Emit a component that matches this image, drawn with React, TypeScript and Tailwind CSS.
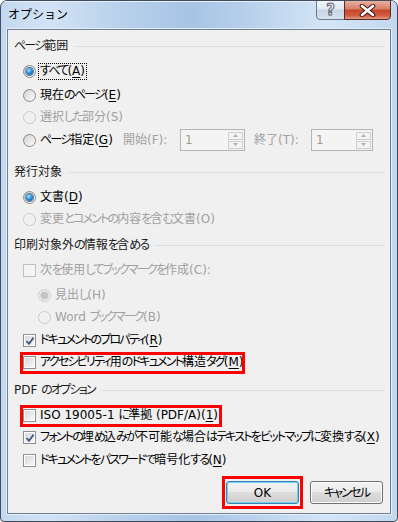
import React from "react";

function J({ t }: { t: string }) {
  const parts = t.match(/[\u3040-\u30ff]+|[^\u3040-\u30ff]+/g) || [];
  return (
    <>
      {parts.map((p, i) =>
        /[\u3040-\u30ff]/.test(p) ? (
          <span key={i} className="tracking-[-1.8px]">
            {p}
          </span>
        ) : (
          <span key={i}>{p}</span>
        )
      )}
    </>
  );
}

function Radio({ checked, disabled }: { checked?: boolean; disabled?: boolean }) {
  if (disabled) {
    return (
      <span className="w-[13px] h-[13px] shrink-0 rounded-full border border-[#c9c9c9] bg-[#f4f4f4] flex items-center justify-center">
        {checked ? (
          <span className="w-[7px] h-[7px] rounded-full bg-[#c4c4c4] shadow-[0_0_0_1px_#d8d8d8]" />
        ) : (
          <span className="w-[9px] h-[9px] rounded-full bg-[#f0f0f0]" />
        )}
      </span>
    );
  }
  return (
    <span className="w-[13px] h-[13px] shrink-0 rounded-full border border-[#8c8c8c] bg-[linear-gradient(135deg,#cfcfcf,#ffffff)] flex items-center justify-center">
      {checked ? (
        <span className="w-[7px] h-[7px] rounded-full bg-[radial-gradient(circle_at_40%_35%,#a8e4ff_0%,#2f8fd8_45%,#0d4a86_100%)] shadow-[0_0_0_1px_#5a7a9a]" />
      ) : (
        <span className="w-[9px] h-[9px] rounded-full bg-[linear-gradient(135deg,#d6d6d6,#fafafa)]" />
      )}
    </span>
  );
}

function Check({ checked, disabled }: { checked?: boolean; disabled?: boolean }) {
  if (disabled) {
    return <span className="w-[13px] h-[13px] shrink-0 border border-[#c0c0c0] bg-[#f4f4f4]" />;
  }
  return (
    <span className="relative w-[13px] h-[13px] shrink-0 border border-[#8e8f8f] bg-white p-[1px]">
      <span className="block w-full h-full bg-[linear-gradient(135deg,#d9d9d9,#f7f7f7)]" />
      {checked && (
        <svg className="absolute left-[1px] top-[1px]" width="10" height="10" viewBox="0 0 10 10">
          <path d="M1.5 5 L4 7.8 L8.6 1.6" fill="none" stroke="#3f5784" strokeWidth="1.8" />
        </svg>
      )}
    </span>
  );
}

function Label({
  pre,
  k,
  post,
  disabled,
  focus,
}: {
  pre: string;
  k: string;
  post: string;
  disabled?: boolean;
  focus?: boolean;
}) {
  return (
    <span
      className={`px-[1px] border leading-[15px] whitespace-nowrap ${focus ? "border-dotted border-black" : "border-transparent"} ${disabled ? "text-[#a0a0a0]" : "text-black"}`}
    >
      <J t={pre} />
      {disabled ? <span>{k}</span> : <span className="underline underline-offset-[2px] decoration-1">{k}</span>}
      <J t={post} />
    </span>
  );
}

function Header({ t, className }: { t: string; className: string }) {
  return (
    <div className={`flex items-center h-[22px] pl-[6px] pr-[5px] ${className}`}>
      <span className="text-[#1b1b1b] whitespace-nowrap">
        <J t={t} />
      </span>
      <span className="flex-1 h-px bg-[#d5dfe5] ml-[7px] mt-[1px]" />
    </div>
  );
}

function SpinInput() {
  return (
    <span className="flex items-center justify-between h-[22px] w-full border border-[#b5b5b5] bg-[#f4f4f4] pl-[4px] pr-[1px]">
      <span className="text-[#a59b8a]">1</span>
      <span className="flex flex-col gap-[1px] w-[15px]">
        <span className="h-[8px] border border-[#cfcfcf] bg-[#f3f3f3] flex items-center justify-center">
          <svg width="5" height="3" viewBox="0 0 5 3">
            <path d="M0 3 L2.5 0 L5 3Z" fill="#b0b0b0" />
          </svg>
        </span>
        <span className="h-[8px] border border-[#cfcfcf] bg-[#f3f3f3] flex items-center justify-center">
          <svg width="5" height="3" viewBox="0 0 5 3">
            <path d="M0 0 L2.5 3 L5 0Z" fill="#b0b0b0" />
          </svg>
        </span>
      </span>
    </span>
  );
}

function Btn({ children, def }: { children: React.ReactNode; def?: boolean }) {
  return (
    <div
      className={`w-[73px] h-[23px] rounded-[3px] border flex items-center justify-center text-black ${def ? "border-[#3c7fb1] shadow-[inset_0_0_0_1px_#6fd0f6]" : "border-[#707070] shadow-[inset_0_0_0_1px_#fcfcfc]"} bg-[linear-gradient(180deg,#f2f2f2_0%,#ebebeb_49%,#dddddd_50%,#cfcfcf_100%)]`}
    >
      {children}
    </div>
  );
}

export default function App() {
  return (
    <div className="w-[398px] h-[522px] flex flex-col overflow-hidden rounded-t-[7px] rounded-b-[4px] border border-[#3f4d5e] bg-[linear-gradient(90deg,#c3d8ef_0%,#d2e3f5_12%,#b9d1eb_30%,#a7c4e5_48%,#b7d0eb_62%,#d3e5f7_82%,#c2d8ef_100%)] [font-family:'DejaVu_Sans','Noto_Sans_CJK_JP',sans-serif] [font-feature-settings:'palt'] text-[12px]">
      <div className="h-[28px] shrink-0 flex items-start shadow-[inset_0_1px_0_#e8f1fb]">
        <span className="pl-[7px] pt-[5px] text-[12px] text-black leading-[18px] [font-feature-settings:normal]">オプション</span>
        <div className="ml-auto mr-[6px] flex h-[20px] -mt-[1px]">
          <div className="w-[29px] h-[20px] border border-[#6b7a8a] rounded-bl-[4px] bg-[linear-gradient(180deg,#f1f5f9_0%,#e0e8f1_45%,#c8d5e3_50%,#d6e2ee_100%)] flex items-center justify-center">
            <span className="text-[15px] font-bold leading-none text-[#f4f6f8] [-webkit-text-stroke:1px_#5b6470]">?</span>
          </div>
          <div className="w-[47px] h-[20px] -ml-px border border-[#5b2a22] rounded-br-[4px] bg-[linear-gradient(180deg,#eab0a2_0%,#d77e66_45%,#c5452b_50%,#d15a3e_80%,#e39a84_100%)] flex items-center justify-center">
            <svg width="17" height="13" viewBox="0 0 17 13">
              <path d="M3 2 L14 11 M14 2 L3 11" stroke="#3a1a14" strokeWidth="4.6" strokeLinecap="round" />
              <path d="M3 2 L14 11 M14 2 L3 11" stroke="#ffffff" strokeWidth="2.6" strokeLinecap="round" />
            </svg>
          </div>
        </div>
      </div>

      <div className="mx-[6px] mb-[7px] flex-1 flex flex-col border border-[#6f8091] bg-[#f0f0f0] shadow-[0_0_0_1px_#e4eefa]">
        <Header t="ページ範囲" className="mt-[5px]" />

        <div className="flex items-center gap-[2px] h-[22px] pl-[15px] mt-[3px]">
          <Radio checked />
          <Label focus pre="すべて(" k="A" post=")" />
        </div>
        <div className="flex items-center gap-[2px] h-[22px] pl-[15px] mt-[2px]">
          <Radio />
          <Label pre="現在のページ(" k="E" post=")" />
        </div>
        <div className="flex items-center gap-[2px] h-[22px] pl-[15px]">
          <Radio disabled />
          <Label disabled pre="選択した部分(" k="S" post=")" />
        </div>
        <div className="flex items-center h-[22px] pl-[15px] mt-[1px]">
          <span className="flex items-center gap-[2px] w-[100px]">
            <Radio />
            <Label pre="ページ指定(" k="G" post=")" />
          </span>
          <span className="w-[57px] text-[#a0a0a0] whitespace-nowrap">開始(F):</span>
          <span className="w-[65px]">
            <SpinInput />
          </span>
          <span className="w-[57px] ml-[9px] text-[#a0a0a0] whitespace-nowrap">終了(T):</span>
          <span className="w-[62px]">
            <SpinInput />
          </span>
        </div>

        <Header t="発行対象" className="mt-[10px]" />
        <div className="flex items-center gap-[2px] h-[22px] pl-[15px] mt-[3px]">
          <Radio checked />
          <Label pre="文書(" k="D" post=")" />
        </div>
        <div className="flex items-center gap-[2px] h-[22px] pl-[15px]">
          <Radio disabled />
          <Label disabled pre="変更とコメントの内容を含む文書(" k="O" post=")" />
        </div>

        <Header t="印刷対象外の情報を含める" className="mt-[4px]" />
        <div className="flex items-center gap-[2px] h-[22px] pl-[15px] mt-[3px]">
          <Check disabled />
          <Label disabled pre="次を使用してブックマークを作成(" k="C" post="):" />
        </div>
        <div className="flex items-center gap-[2px] h-[22px] pl-[30px] mt-[3px]">
          <Radio disabled checked />
          <Label disabled pre="見出し(" k="H" post=")" />
        </div>
        <div className="flex items-center gap-[2px] h-[22px] pl-[30px]">
          <Radio disabled />
          <Label disabled pre="Word ブックマーク(" k="B" post=")" />
        </div>
        <div className="flex items-center gap-[2px] h-[22px] pl-[15px] mt-[1px]">
          <Check checked />
          <Label pre="ドキュメントのプロパティ(" k="R" post=")" />
        </div>
        <div className="relative flex items-center gap-[2px] h-[22px] pl-[15px]">
          <Check />
          <Label pre="アクセシビリティ用のドキュメント構造タグ(" k="M" post=")" />
          <span className="absolute left-[12px] top-[1px] w-[225px] h-[22px] border-[3px] border-[#ff0000]" />
        </div>

        <Header t="PDF のオプション" className="mt-[6px]" />
        <div className="relative flex items-center gap-[2px] h-[22px] pl-[15px] mt-[3px]">
          <Check />
          <Label pre="ISO 19005-1 に準拠 (PDF/A)(" k="1" post=")" />
          <span className="absolute left-[12px] top-[1px] w-[202px] h-[22px] border-[3px] border-[#ff0000]" />
        </div>
        <div className="flex items-center gap-[2px] h-[22px] pl-[15px]">
          <Check checked />
          <Label pre="フォントの埋め込みが不可能な場合はテキストをビットマップに変換する(" k="X" post=")" />
        </div>
        <div className="flex items-center gap-[2px] h-[22px] pl-[15px] mt-[1px]">
          <Check />
          <Label pre="ドキュメントをパスワードで暗号化する(" k="N" post=")" />
        </div>

        <div className="flex justify-end gap-[11px] pr-[7px] mt-[10px]">
          <div className="relative">
            <Btn def>OK</Btn>
            <span className="absolute -left-[4px] -right-[4px] -top-[5px] -bottom-[5px] border-[3px] border-[#ff0000]" />
          </div>
          <Btn>
            <J t="キャンセル" />
          </Btn>
        </div>
      </div>
    </div>
  );
}
